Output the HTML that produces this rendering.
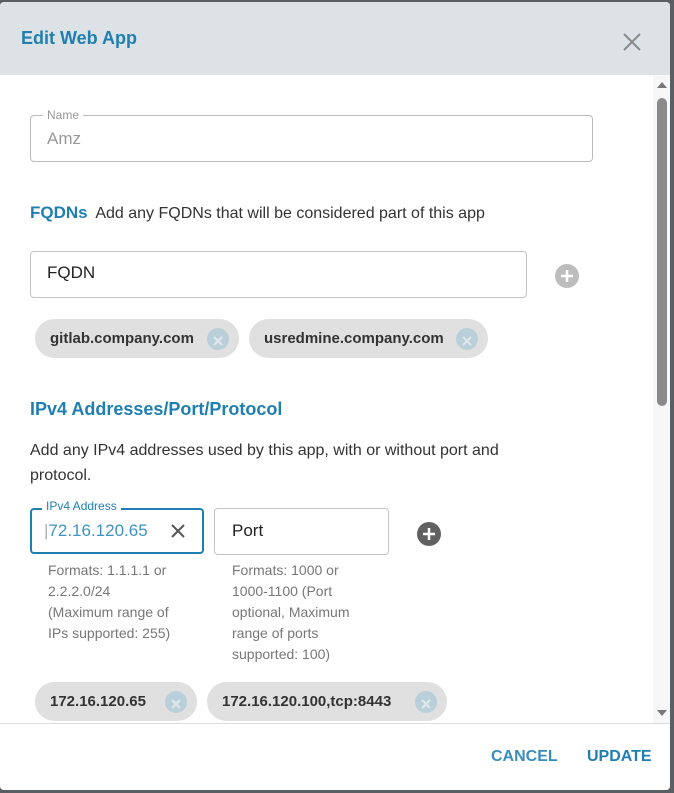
<!DOCTYPE html>
<html><head><style>
*{box-sizing:border-box;margin:0;padding:0}
body{width:674px;height:793px;background:#5a5f63;font-family:"Liberation Sans",sans-serif;position:relative;overflow:hidden}
.dlg{position:absolute;left:0;top:2px;width:670px;height:788px;background:#fff;border-radius:4px;overflow:hidden}
.hdr{position:absolute;left:0;top:0;width:670px;height:73px;background:#dde2e6}
.t{position:absolute;font-size:18px;color:#1f7fb0;font-weight:bold;left:21px;top:26px}
.abs{position:absolute}
.box{position:absolute;border:1px solid #c4c4c4;border-radius:4px;background:#fff}
.chip{position:absolute;height:39px;background:#e0e0e0;border-radius:20px;font-size:15px;font-weight:bold;color:#333;line-height:39px;padding-left:15px}
.cx{position:absolute;top:9px;width:22px;height:22px;border-radius:50%;background:#b9cfd9}
.help{position:absolute;font-size:14px;color:#777;line-height:21px;white-space:nowrap}
</style></head><body>
<div class="dlg">
<div class="hdr"><div class="t">Edit Web App</div>
<svg class="abs" style="left:622px;top:30px" width="20" height="20"><path d="M2 2L18 18M18 2L2 18" stroke="#888" stroke-width="2"/></svg></div>
<div class="abs" style="left:653px;top:73px;width:17px;height:650px;background:#f7f7f7"></div>
<svg class="abs" style="left:656px;top:79px" width="12" height="8"><path d="M1 7L6 1L11 7Z" fill="#777"/></svg>
<div class="abs" style="left:657px;top:96px;width:10px;height:308px;background:#8a8a8a;border-radius:5px"></div>
<svg class="abs" style="left:656px;top:707px" width="12" height="8"><path d="M1 1L6 7L11 1Z" fill="#777"/></svg>

<div class="box" style="left:30px;top:113px;width:563px;height:47px;border-color:#bbb"></div>
<div class="abs" style="left:43px;top:106px;background:#fff;padding:0 4px;font-size:12px;color:#999">Name</div>
<div class="abs" style="left:47px;top:127px;font-size:17px;color:#999">Amz</div>

<div class="abs" style="left:30px;top:201px;font-size:17px;font-weight:bold;color:#1f7fb0">FQDNs <span style="font-weight:normal;color:#333;font-size:16px;margin-left:3px">Add any FQDNs that will be considered part of this app</span></div>

<div class="box" style="left:30px;top:249px;width:497px;height:47px"></div>
<div class="abs" style="left:47px;top:261px;font-size:17px;color:#222">FQDN</div>
<svg class="abs" style="left:555px;top:262px" width="24" height="24"><circle cx="12" cy="12" r="12" fill="#bdbdbd"/><path d="M12 6V18M6 12H18" stroke="#fff" stroke-width="2.5"/></svg>

<div class="chip" style="left:35px;top:317px;width:204px">gitlab.company.com<div class="cx" style="left:172px"><svg width="22" height="22"><path d="M7 7L15 15M15 7L7 15" stroke="#e0e8ec" stroke-width="2"/></svg></div></div>
<div class="chip" style="left:249px;top:317px;width:239px">usredmine.company.com<div class="cx" style="left:207px"><svg width="22" height="22"><path d="M7 7L15 15M15 7L7 15" stroke="#e0e8ec" stroke-width="2"/></svg></div></div>

<div class="abs" style="left:30px;top:397px;font-size:18px;font-weight:bold;color:#1f7fb0">IPv4 Addresses/Port/Protocol</div>
<div class="abs" style="left:30px;top:436px;width:525px;font-size:16px;color:#333;line-height:25px">Add any IPv4 addresses used by this app, with or without port and protocol.</div>

<div class="box" style="left:30px;top:506px;width:174px;height:46px;border:2px solid #1f7fb0"></div>
<div class="abs" style="left:42px;top:497px;background:#fff;padding:0 4px;font-size:12px;color:#1f7fb0">IPv4 Address</div>
<div class="abs" style="left:44px;top:519px;font-size:17px;color:#3f93c4"><span style="color:#aaa">|</span>72.16.120.65</div>
<svg class="abs" style="left:170px;top:521px" width="16" height="16"><path d="M2 2L14 14M14 2L2 14" stroke="#555" stroke-width="2"/></svg>
<div class="box" style="left:214px;top:506px;width:175px;height:47px"></div>
<div class="abs" style="left:232px;top:519px;font-size:17px;color:#222">Port</div>
<svg class="abs" style="left:416px;top:519px" width="26" height="26"><circle cx="13" cy="13" r="12" fill="#616161"/><path d="M13 7V19M7 13H19" stroke="#fff" stroke-width="2.5"/></svg>
<div class="help" style="left:48px;top:558px">Formats: 1.1.1.1 or<br>2.2.2.0/24<br>(Maximum range of<br>IPs supported: 255)</div>
<div class="help" style="left:232px;top:558px">Formats: 1000 or<br>1000-1100 (Port<br>optional, Maximum<br>range of ports<br>supported: 100)</div>

<div class="chip" style="left:35px;top:680px;width:162px">172.16.120.65<div class="cx" style="left:130px"><svg width="22" height="22"><path d="M7 7L15 15M15 7L7 15" stroke="#e0e8ec" stroke-width="2"/></svg></div></div>
<div class="chip" style="left:207px;top:680px;width:240px">172.16.120.100,tcp:8443<div class="cx" style="left:208px"><svg width="22" height="22"><path d="M7 7L15 15M15 7L7 15" stroke="#e0e8ec" stroke-width="2"/></svg></div></div>

<div class="abs" style="left:0;top:721px;width:670px;height:67px;background:#fff;border-top:1px solid #ddd"></div>
<div class="abs" style="left:491px;top:746px;font-size:16px;font-weight:bold;color:#3a8dbb">CANCEL</div>
<div class="abs" style="left:587px;top:746px;font-size:16px;font-weight:bold;color:#1f7fb0">UPDATE</div>
</div>
</body></html>
